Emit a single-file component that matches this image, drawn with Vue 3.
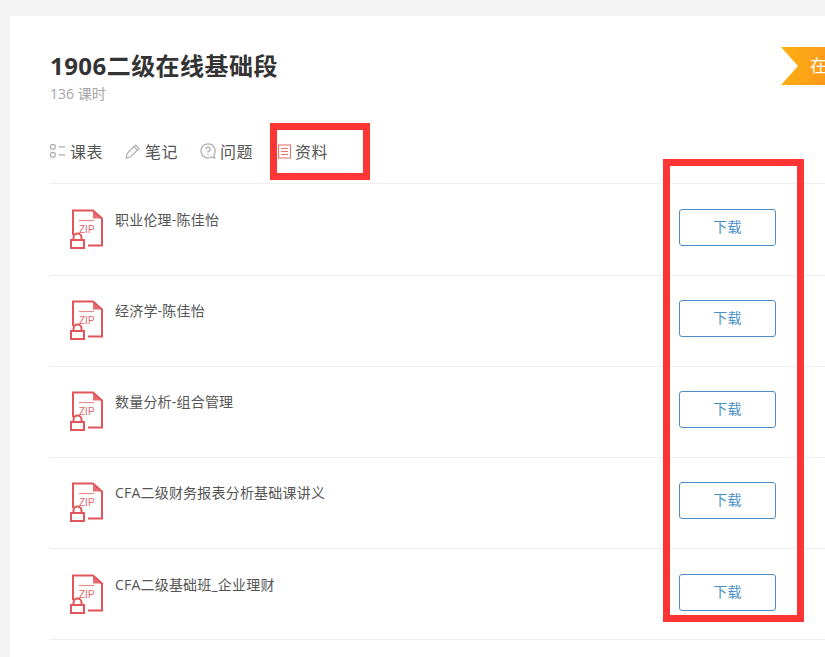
<script setup>
const rows = [
  '职业伦理-陈佳怡',
  '经济学-陈佳怡',
  '数量分析-组合管理',
  'CFA二级财务报表分析基础课讲义',
  'CFA二级基础班_企业理财'
]
</script>

<template>
  <div class="page">
    <div class="card">
      <header class="head">
        <h1 class="title">1906二级在线基础段</h1>
        <div class="sub">136 课时</div>
        <div class="ribbon"><span>在</span></div>
      </header>
      <nav class="tabs">
        <a class="tab">
          <svg width="16" height="16" viewBox="0 0 16 16" fill="none" stroke="#aaa" stroke-width="1.2">
            <rect x="0.6" y="1.6" width="4.5" height="4.5" rx="1" />
            <rect x="0.6" y="9.6" width="4.5" height="4.5" rx="1" />
            <path d="M9 3.8h6M9 11.8h6" />
          </svg>
          <span>课表</span>
        </a>
        <a class="tab">
          <svg width="16" height="16" viewBox="0 0 16 16" fill="none" stroke="#aaa" stroke-width="1.1">
            <path d="M1.2 15l.9-4.4L10.6 2l3.5 3.5-8.6 8.6z" />
            <path d="M9 3.6l3.5 3.5" />
          </svg>
          <span>笔记</span>
        </a>
        <a class="tab">
          <svg width="16" height="16" viewBox="0 0 16 16" fill="none" stroke="#aaa" stroke-width="1.2">
            <path d="M8 .9a7 7 0 1 0 3.4 13.1l3.4 1-.9-3.2A7 7 0 0 0 8 .9z" />
            <path d="M5.9 6.2A2.1 2.1 0 1 1 8 8.4v1.4M8 11v1.3" />
          </svg>
          <span>问题</span>
        </a>
        <a class="tab">
          <svg width="16" height="16" viewBox="0 0 16 16" fill="none" stroke="#e8736f" stroke-width="1.1">
            <rect x="3.5" y="2" width="12" height="13" />
            <path d="M6 5.5h7M6 8.5h7M6 11.5h7" />
          </svg>
          <span>资料</span>
        </a>
      </nav>
      <ul class="list">
        <li v-for="name in rows" :key="name" class="row">
          <svg class="zip" width="34" height="40" viewBox="0 0 34 40" fill="none">
            <path d="M3 26V1.5h20l9 8V36.5H18" stroke="#e2555a" stroke-width="2" />
            <path d="M23 2v7.5h9z" fill="#e2555a" opacity="0.85" />
            <path d="M9 11.5h15" stroke="#e98a8d" stroke-width="1.2" />
            <text x="9" y="23.5" class="ziptext">ZIP</text>
            <rect x="1" y="31" width="13" height="8" stroke="#e2555a" stroke-width="2" />
            <path d="M3.5 31v-2.5a4 4 0 0 1 8 0V31" stroke="#e2555a" stroke-width="2" />
          </svg>
          <div class="name">{{ name }}</div>
          <button class="btn">下载</button>
        </li>
      </ul>
    </div>
    <div class="mark mark-tab"></div>
    <div class="mark mark-col"></div>
  </div>
</template>

<style scoped>
.page {
  position: relative;
  width: 825px;
  height: 657px;
  overflow: hidden;
  background: #f4f4f4;
  padding: 16px 0 0 10px;
  box-sizing: border-box;
  font-family: "Open Sans", "Noto Sans CJK SC", sans-serif;
}
.card {
  background: #fff;
  height: 641px;
  padding: 0 0 0 40px;
  box-sizing: border-box;
}
.head {
  position: relative;
  height: 107px;
  padding-top: 33px;
  box-sizing: border-box;
}
.title {
  margin: 0;
  font-size: 24px;
  line-height: 34px;
  font-weight: 700;
  letter-spacing: 0.45px;
  color: #333;
}
.sub {
  font-size: 14px;
  line-height: 20px;
  margin-top: 1px;
  color: #a5a5a5;
}
.ribbon {
  position: absolute;
  left: 731px;
  top: 31px;
  width: 44px;
  height: 38px;
  background: linear-gradient(100deg, #fdb012, #fc9a1b);
  clip-path: polygon(0 0, 100% 0, 100% 100%, 0 100%, 17px 50%);
  color: #fff;
  font-size: 17px;
  line-height: 38px;
  padding-left: 29px;
  box-sizing: border-box;
  white-space: nowrap;
  overflow: hidden;
}
.tabs {
  display: flex;
  height: 61px;
  align-items: center;
  gap: 22px;
  border-bottom: 1px solid #eee;
  box-sizing: border-box;
  padding-bottom: 4px;
}
.tab {
  display: flex;
  align-items: center;
  gap: 4px;
  font-size: 16px;
  letter-spacing: 0.5px;
  color: #555;
}
.list {
  list-style: none;
  margin: 0;
  padding: 0;
}
.row {
  display: flex;
  height: 91px;
  box-sizing: border-box;
  border-bottom: 1px solid #eee;
  padding: 24px 49px 0 20px;
}
.row:first-child {
  height: 92px;
  padding-top: 25px;
}
.row:last-child {
  padding-top: 25px;
}
.zip {
  flex: none;
  margin-right: 11px;
}
.ziptext {
  font-size: 10px;
  fill: #e2666a;
  font-family: "Liberation Sans", sans-serif;
}
.name {
  flex: 1;
  font-size: 14px;
  line-height: 20px;
  margin-top: 1px;
  letter-spacing: 0.2px;
  color: #555;
}
.btn {
  width: 97px;
  height: 37px;
  border: 1px solid #4a8fcb;
  border-radius: 3px;
  background: #fff;
  color: #4a90c8;
  font: inherit;
  font-size: 14px;
  letter-spacing: 0.3px;
  padding: 0 0 3px;
}
.mark {
  position: absolute;
  border: 7px solid #fd3535;
  box-sizing: border-box;
}
.mark-tab {
  left: 270px;
  top: 123px;
  width: 100px;
  height: 57px;
}
.mark-col {
  left: 663px;
  top: 159px;
  width: 141px;
  height: 463px;
}
</style>
